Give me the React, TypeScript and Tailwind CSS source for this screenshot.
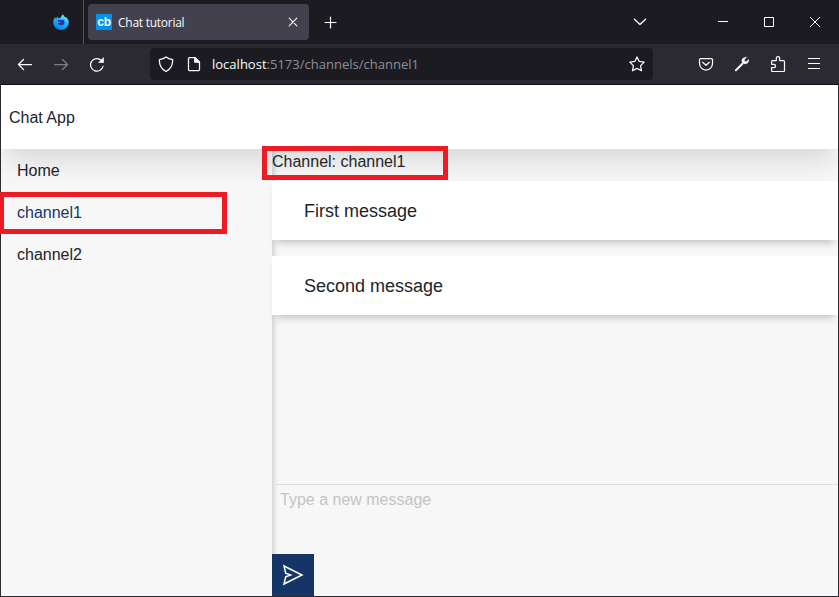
import React from "react";

const stroke = {
  fill: "none",
  stroke: "#fbfbfe",
  strokeWidth: 1.25,
  strokeLinecap: "round" as const,
  strokeLinejoin: "round" as const,
};

function Icon({ children, className = "" }: { children: React.ReactNode; className?: string }) {
  return (
    <svg viewBox="0 0 16 16" className={`h-4 w-4 shrink-0 ${className}`} {...stroke}>
      {children}
    </svg>
  );
}

function FirefoxLogo() {
  return (
    <svg viewBox="0 0 16 16" className="ml-[53px] h-4 w-4 shrink-0">
      <defs>
        <linearGradient id="fox" x1="0.8" y1="0" x2="0.3" y2="1">
          <stop offset="0" stopColor="#7df5ff" />
          <stop offset="0.4" stopColor="#28bdff" />
          <stop offset="1" stopColor="#087be8" />
        </linearGradient>
      </defs>
      <path d="M2 3.2 3.2 4.8 4.4 2.5 5.6 4.4 8 3.3C8.2 1.8 9.2 .8 10.2.2c.1 1.6 1.3 2.2 2.1 3.2l.8-.7c.1 1.1 2.7 2.5 2.7 5.7a7.8 7.5 0 0 1-15.6 0C.2 6.2 1 4.8 2 3.2Z" fill="url(#fox)" />
      <path d="M4.300 6.300c1.200-.9 2.600-.8 3.400 0l2.600-.5c1.300.8 1.500 2.500 1 3.600-.5 1.300-1.700 1.900-3.100 1.800-2.100 0-3.300-1-3.600-2.400l2 .3 1.300-.9-2.600-.8Z" fill="#2436a0" />
    </svg>
  );
}

function TabBar() {
  return (
    <div className="flex h-11 shrink-0 items-center bg-[#1c1b22]">
      <div className="flex h-full w-[84px] items-center border-r border-[#55545c]">
        <FirefoxLogo />
      </div>
      <div className="ml-1 flex h-9 w-[221px] items-center rounded bg-[#42414d] pl-2 pr-2">
        <span className="flex h-4 w-4 items-center justify-center bg-[#0590ea] pb-px font-['Liberation_Sans'] text-[12px] font-bold leading-none tracking-[-0.2px] text-white">cb</span>
        <span className="ml-[6px] whitespace-nowrap pt-[2px] font-['Open_Sans',sans-serif] text-[12px] tracking-[-0.26px] text-[#fbfbfe]">Chat tutorial</span>
        <Icon className="ml-auto"><path d="m4.2 4.2 7.6 7.6m0-7.6-7.6 7.6" strokeWidth="1.1" /></Icon>
      </div>
      <Icon className="ml-[14px] mt-px"><path d="M7.500 2v11M2 7.500h11" strokeWidth="1.2" /></Icon>
      <Icon className="ml-auto mr-[70px]"><path d="m2.4 5.2 5.6 5.300 5.6-5.300" strokeWidth="1.3" /></Icon>
      <svg viewBox="0 0 10 10" className="mr-[36px] h-[10px] w-[10px]" fill="none" stroke="#fff"><path d="M0 4.5h10" /></svg>
      <svg viewBox="0 0 10 10" className="mr-[36px] h-[10px] w-[10px]" fill="none" stroke="#fff"><path d="M.5.5h9v9h-9Z" /></svg>
      <svg viewBox="0 0 10 10" className="mr-[19px] h-[10px] w-[10px]" fill="none" stroke="#fff"><path d="m0 0 10 10M10 0 0 10" /></svg>
    </div>
  );
}

function Toolbar() {
  return (
    <div className="flex h-10 shrink-0 items-center bg-[#2b2a33]">
      <Icon className="ml-[17px]"><path d="M14.5 8.500H1.500M6.500 3.500l-5 5 5 5" /></Icon>
      <Icon className="ml-5 opacity-40"><path d="M1.500 8.500h13M9.500 3.500l5 5-5 5" /></Icon>
      <Icon className="ml-5">
        <path d="M12.200 4.300A6.300 6.300 0 1 0 14 10.300" />
        <path d="M14.500 2v4.500H10Z" fill="#fbfbfe" strokeWidth=".7" />
      </Icon>
      <div className="ml-[45px] flex h-8 w-[503px] items-center rounded bg-[#1c1b22] pl-2 pr-2">
        <Icon><path d="M8 .9c1.8 1.500 4 2.300 6.600 2.700.3 5-1.900 9.400-6.600 11.900C3.300 13 1.100 8.600 1.400 3.600 4 3.200 6.200 2.400 8 .9Z" /></Icon>
        <Icon className="ml-3"><path d="M3.500 1.500h5.300l4.700 4.700v7.300q0 1-1 1h-9q-1 0-1-1v-11q0-1 1-1Z" /><path d="M8.800 1.500v4.700h4.700Z" fill="#fbfbfe" /></Icon>
        <span className="ml-[10px] whitespace-nowrap pt-[2px] font-['Open_Sans',sans-serif] text-[13px] tracking-[0.01px] text-[#8f8f96]"><span className="text-[#fbfbfe]">localhost</span>:5173/channels/channel1</span>
        <Icon className="ml-auto"><path d="m8 .9 2.2 4.500 5 .7-3.600 3.500.9 5.200L8 12.400l-4.500 2.400.9-5.200L.8 6.100l5-.7Z" /></Icon>
      </div>
      <Icon className="ml-[45px]"><path d="M2.500 2.500h11q1 0 1 1v4a6.500 6.500 0 0 1-13 0v-4q0-1 1-1ZM4.700 6.300 8 9.300l3.300-3" /></Icon>
      <Icon className="ml-5"><path d="m1.900 14.200 6.500-6.500" strokeWidth="2" /><path d="M12.800 1.300 10.500 3.600l.2 1.700 1.700.2 2.300-2.300c.6 2.500-1.100 4.900-3.700 4.700-2.400 0-3.800-2.200-3.100-4.300.7-1.900 2.800-2.900 4.900-2.300Z" fill="#fbfbfe" strokeWidth=".2" /></Icon>
      <Icon className="ml-5"><path d="M2.500 4.500h3.800V2.300a1.700 1.700 0 0 1 3.400 0v2.200h3.800q1 0 1 1v9q0 1-1 1h-11q-.9 0-.9-1v-3h2.300a1.500 1.500 0 0 0 0-3.200H1.600V5.500q0-1 .9-1Z" /></Icon>
      <Icon className="ml-5"><path d="M2 2.500h12M2 7.500h12M2 12.500h12" strokeWidth="1.1" strokeLinecap="butt" /></Icon>
    </div>
  );
}

function Message({ text }: { text: string }) {
  return (
    <div className="z-20 mb-4 flex h-[59px] shrink-0 items-center bg-white pl-8 pt-[2px] text-[18px] text-[#212529] shadow-[0_6px_8px_-4px_rgba(0,0,0,0.25)]">
      {text}
    </div>
  );
}

export default function App() {
  return (
    <div className="relative flex h-[597px] w-[839px] flex-col overflow-hidden bg-[#2b2a33] font-['Liberation_Sans',Arial,sans-serif] text-[16px] text-[#212529]">
      <TabBar />
      <Toolbar />
      <div className="mx-px mb-px flex min-h-0 flex-1 flex-col overflow-hidden border-t border-[#0c0c0d] bg-[#f7f7f7]">
        <header className="z-10 flex h-16 shrink-0 items-center bg-white pl-2 pt-[2px] shadow-[0_20px_25px_-5px_rgba(0,0,0,0.1),0_8px_10px_-5px_rgba(0,0,0,0.02)]">Chat App</header>
        <div className="flex min-h-0 flex-1">
          <nav className="flex w-[271px] shrink-0 flex-col bg-[#f7f7f7] shadow-[1px_0_6px_rgba(0,0,0,0.22)]">
            <a className="flex h-[42px] items-center pl-4 pt-[2px]">Home</a>
            <a className="flex h-[42px] items-center pl-4 pt-[2px] text-[#163567]">channel1</a>
            <a className="flex h-[42px] items-center pl-4 pt-[2px]">channel2</a>
          </nav>
          <main className="flex min-w-0 flex-1 flex-col">
            <div className="z-20 h-8 shrink-0 pt-px leading-6">Channel: channel1</div>
            <Message text="First message" />
            <Message text="Second message" />
            <div className="ml-1 mt-auto h-[70px] shrink-0 border-t border-[#e0e0e0] pl-1 pt-[3px] leading-6 text-[#c4c4c4]">Type a new message</div>
            <button className="flex h-[42px] w-[42px] shrink-0 items-center justify-center bg-[#163567]" aria-label="Send">
              <svg viewBox="0 0 22 22" className="h-[22px] w-[22px]" fill="none" stroke="#fff" strokeWidth="1.5" strokeLinejoin="miter">
                <path d="m2 2 18 9-18 9 1.700-7.300L8.500 11 3.700 9.300Z" />
              </svg>
            </button>
          </main>
        </div>
      </div>
      <div className="absolute -left-px top-[192px] z-30 h-[42px] w-[228px] border-[5px] border-[#ed1c24]" />
      <div className="absolute left-[262px] top-[146px] z-30 h-[34px] w-[186px] border-[5px] border-[#ed1c24]" />
    </div>
  );
}
